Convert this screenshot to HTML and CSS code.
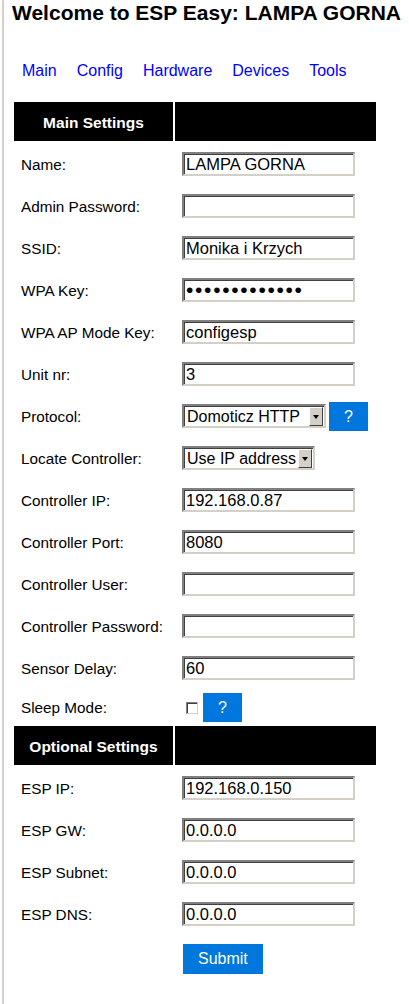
FILE: index.html
```html
<!DOCTYPE html>
<html lang="en">
<head>
    <meta charset="UTF-8">
    <meta name="viewport" content="width=device-width, initial-scale=1.0">
    <title>ESP Easy</title>
    <link rel="stylesheet" href="styles.css">
</head>
<body>
    <h1>Welcome to ESP Easy: LAMPA GORNA</h1>

    <nav class="menu">
      <a href="#">Main</a>
      <a href="#">Config</a>
      <a href="#">Hardware</a>
      <a href="#">Devices</a>
      <a href="#">Tools</a>
    </nav>

    <form class="settings">
      <table>
        <tr class="head"><th>Main Settings</th><th></th></tr>
        <tr><td>Name:</td><td><input type="text" value="LAMPA GORNA"></td></tr>
        <tr><td>Admin Password:</td><td><input type="password" value=""></td></tr>
        <tr><td>SSID:</td><td><input type="text" value="Monika i Krzych"></td></tr>
        <tr><td>WPA Key:</td><td><input type="password" value="1234567890123"></td></tr>
        <tr><td>WPA AP Mode Key:</td><td><input type="text" value="configesp"></td></tr>
        <tr><td>Unit nr:</td><td><input type="text" value="3"></td></tr>
        <tr>
          <td>Protocol:</td>
          <td>
            <span class="select select-protocol">
              <select>
                <option>Domoticz HTTP</option>
                <option>Domoticz MQTT</option>
              </select>
              <span class="arrow"></span>
            </span><a class="help" href="#">?</a>
          </td>
        </tr>
        <tr>
          <td>Locate Controller:</td>
          <td>
            <span class="select select-locate">
              <select>
                <option>Use IP address</option>
                <option>Use Hostname</option>
              </select>
              <span class="arrow"></span>
            </span>
          </td>
        </tr>
        <tr><td>Controller IP:</td><td><input type="text" value="192.168.0.87"></td></tr>
        <tr><td>Controller Port:</td><td><input type="text" value="8080"></td></tr>
        <tr><td>Controller User:</td><td><input type="text" value=""></td></tr>
        <tr><td>Controller Password:</td><td><input type="password" value=""></td></tr>
        <tr><td>Sensor Delay:</td><td><input type="text" value="60"></td></tr>
        <tr class="short">
          <td>Sleep Mode:</td>
          <td><input type="checkbox" class="check"><a class="help" href="#">?</a></td>
        </tr>
        <tr class="head"><th>Optional Settings</th><th></th></tr>
        <tr><td>ESP IP:</td><td><input type="text" value="192.168.0.150"></td></tr>
        <tr><td>ESP GW:</td><td><input type="text" value="0.0.0.0"></td></tr>
        <tr><td>ESP Subnet:</td><td><input type="text" value="0.0.0.0"></td></tr>
        <tr><td>ESP DNS:</td><td><input type="text" value="0.0.0.0"></td></tr>
        <tr class="submit-row"><td></td><td><button type="submit" class="submit">Submit</button></td></tr>
      </table>
    </form>
</body>
</html>
```

FILE: styles.css
```css
body {
  font-family: "Liberation Sans", Arial, sans-serif;
  color: #000;
  margin: 0 0 0 2px;
  padding: 0 0 0 8px;
  border-left: 2px solid #d4d0c8;
  min-height: 100vh;
  box-sizing: border-box;
}
h1 {
  font-size: 21px;
  line-height: 24px;
  font-weight: bold;
  margin: 1px 0 0;
  white-space: nowrap;
}
.menu {
  display: flex;
  margin-top: 37px;
  font-size: 16px;
  line-height: 18px;
}
.menu a {
  color: #0000ff;
  text-decoration: none;
  padding: 0 10px;
}
.settings table {
  margin-top: 20px;
  border-collapse: separate;
  border-spacing: 2px;
  table-layout: fixed;
}
th {
  background: #000;
  color: #fff;
  font-size: 15.5px;
  line-height: 17px;
  height: 39px;
  padding: 2px 7px 0;
  box-sizing: border-box;
}
th:first-child {
  width: 159px;
}
th:last-child {
  width: 201px;
}
td {
  font-size: 15.3px;
  line-height: 17px;
  height: 40px;
  padding: 8px 7px 6px;
  box-sizing: border-box;
  vertical-align: middle;
  white-space: nowrap;
}
.short td {
  height: 35px;
  padding-top: 7px;
  padding-bottom: 5px;
}
td input[type="text"],
td input[type="password"] {
  width: 173px;
  height: 24px;
  box-sizing: border-box;
  margin: 0;
  padding: 0 2px;
  border: 2px solid;
  border-color: #808080 #d4d0c8 #d4d0c8 #808080;
  box-shadow: inset 1px 1px 0 #404040;
  font-family: "Liberation Sans", Arial, sans-serif;
  font-size: 16.5px;
  color: #000;
  background: #fff;
  vertical-align: middle;
}
td input[type="password"] {
  font-size: 21px;
  letter-spacing: 1.7px;
}
.select {
  display: inline-flex;
  height: 24px;
  box-sizing: border-box;
  border: 2px solid;
  border-color: #808080 #d4d0c8 #d4d0c8 #808080;
  box-shadow: inset 1px 1px 0 #404040;
  background: #fff;
  vertical-align: middle;
}
.select-protocol {
  width: 144px;
}
.select-locate {
  width: 133px;
}
.select select {
  appearance: none;
  -webkit-appearance: none;
  flex: 1;
  min-width: 0;
  border: none;
  background: transparent;
  margin: 0;
  padding: 0 0 0 3px;
  font-family: "Liberation Sans", Arial, sans-serif;
  font-size: 16px;
  color: #000;
  outline: none;
}
.select .arrow {
  width: 14px;
  flex: none;
  box-sizing: border-box;
  margin: 1px 1px 0 0;
  background: #d4d0c8;
  border: 1px solid;
  border-color: #fff #404040 #404040 #fff;
  display: flex;
  align-items: center;
  justify-content: center;
}
.select .arrow::after {
  content: "";
  border-left: 3px solid transparent;
  border-right: 3px solid transparent;
  border-top: 4px solid #000;
}
.help {
  display: inline-block;
  vertical-align: middle;
  margin: -3px 0 -3px 3px;
  width: 39px;
  height: 29px;
  line-height: 29px;
  text-align: center;
  background: #0077dd;
  color: #fff;
  font-size: 16px;
  text-decoration: none;
}
.check {
  appearance: none;
  -webkit-appearance: none;
  width: 12px;
  height: 12px;
  margin: 0 2px 0 4px;
  border: 1px solid;
  border-color: #808080 #d4d0c8 #d4d0c8 #808080;
  box-shadow: inset 1px 1px 0 #404040;
  background: #fff;
  vertical-align: middle;
}
.submit-row td {
  height: 46px;
  vertical-align: top;
  padding-top: 9px;
}
.submit {
  margin: 0 0 0 1px;
  padding: 5px 15px;
  border: none;
  background: #0077dd;
  color: #fff;
  font-family: "Liberation Sans", Arial, sans-serif;
  font-size: 16px;
  line-height: 20px;
  cursor: pointer;
}
```
